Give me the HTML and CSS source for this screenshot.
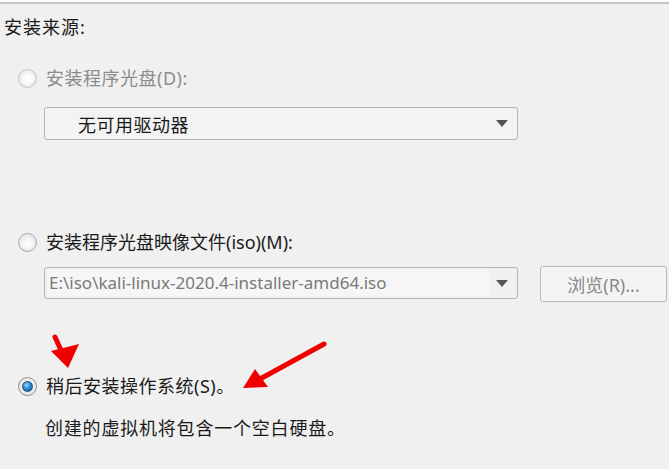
FILE: index.html
```html
<!DOCTYPE html>
<html lang="zh-CN">
<head>
<meta charset="utf-8">
<title>安装来源</title>
<link rel="stylesheet" href="styles.css">
</head>
<body>
<div class="page">
  <div class="topline"></div>
  <div class="title">安装来源:</div>

  <div class="option opt-disc disabled">
    <span class="radio"></span>
    <span class="label">安装程序光盘(D):</span>
  </div>
  <div class="combo combo-disc">
    <span class="combo-text">无可用驱动器</span>
    <span class="caret"></span>
  </div>

  <div class="option opt-iso">
    <span class="radio"></span>
    <span class="label">安装程序光盘映像文件(iso)(M):</span>
  </div>
  <div class="iso-row">
    <div class="combo combo-iso">
      <span class="edit">E:\iso\kali-linux-2020.4-installer-amd64.iso</span>
      <span class="caret"></span>
    </div>
    <button class="browse">浏览(R)...</button>
  </div>

  <div class="option opt-later">
    <span class="radio checked"></span>
    <span class="label">稍后安装操作系统(S)。</span>
  </div>
  <div class="desc">创建的虚拟机将包含一个空白硬盘。</div>

  <svg class="arrows" width="669" height="469" viewBox="0 0 669 469">
    <path d="M55 337 L64 357" stroke="#f00000" stroke-width="5" stroke-linecap="round" fill="none"/>
    <polygon points="68,368 51,351 79,344" fill="#f00000"/>
    <path d="M324 344 L260 379" stroke="#f00000" stroke-width="5" stroke-linecap="round" fill="none"/>
    <polygon points="243,388 255,369 268,387" fill="#f00000"/>
  </svg>
</div>
</body>
</html>
```
FILE: styles.css
```css
html, body {
  margin: 0;
  padding: 0;
}
body {
  background: #f0f0f0;
  font-family: "Noto Sans", "Noto Sans CJK SC", sans-serif;
  font-size: 18px;
  color: #1a1a1a;
}
.page {
  position: relative;
  width: 669px;
  height: 469px;
  overflow: hidden;
}
.topline {
  height: 2px;
  background: #fafafa;
  border-bottom: 2px solid #c6c6c6;
}
.title {
  margin: 13px 0 0 4px;
  line-height: 20px;
  height: 20px;
  letter-spacing: 1px;
}
.option {
  display: flex;
  align-items: center;
  height: 20px;
  line-height: 20px;
  margin-left: 18px;
  gap: 9px;
}
.opt-disc { margin-top: 31px; }
.opt-iso { margin-top: 92px; }
.opt-later { margin-top: 74px; }
.disabled .label { color: #8c8c8c; }
.opt-disc .label, .opt-later .label { letter-spacing: 0.5px; }

.radio {
  width: 17px;
  height: 17px;
  border-radius: 50%;
  border: 1px solid #a9a9a9;
  background: radial-gradient(circle at 50% 55%, #fdfdfd 0, #f4f4f4 45%, #dcdcdc 70%, #cfcfcf 100%);
  box-shadow: inset 0 0 0 2px #ececec;
  flex: none;
  position: relative;
}
.disabled .radio {
  border-color: #c4c4c4;
  background: radial-gradient(circle at 50% 55%, #ffffff 0, #f7f7f7 50%, #e6e6e6 100%);
}
.radio.checked {
  border-color: #8e8e8e;
  background: radial-gradient(circle at 50% 50%, #f2f2f2 0, #e0e0e0 100%);
}
.radio.checked::after {
  content: "";
  position: absolute;
  left: 3px;
  top: 3px;
  width: 9px;
  height: 9px;
  border-radius: 50%;
  border: 1px solid #1c4f7a;
  background: radial-gradient(circle at 40% 35%, #9fd6ff 0, #2b8ad8 45%, #0b4f95 100%);
}

.combo {
  box-sizing: border-box;
  width: 474px;
  height: 33px;
  border: 1px solid #b3b3b3;
  border-radius: 3px;
  background: #f3f3f3;
  display: flex;
  align-items: center;
  position: relative;
}
.combo-disc {
  margin: 19px 0 0 44px;
}
.combo-text {
  margin-left: 33px;
  flex: 1;
  letter-spacing: 0.5px;
}
.caret {
  width: 0;
  height: 0;
  border-left: 6px solid transparent;
  border-right: 6px solid transparent;
  border-top: 7px solid #555;
  margin-right: 9px;
  flex: none;
}
.iso-row {
  display: flex;
  align-items: flex-start;
  margin: 14px 0 0 44px;
  gap: 22px;
}
.combo-iso {
  margin-top: 1px;
  height: 32px;
  background: #f0f0f0;
  padding: 2px 0 2px 2px;
  align-items: stretch;
}
.combo-iso .edit {
  flex: none;
  width: 440px;
  background: #f6f6f6;
  color: #7a7a7a;
  line-height: 26px;
  padding-left: 2px;
  font-size: 17px;
  white-space: nowrap;
  overflow: hidden;
}
.combo-iso .caret {
  align-self: center;
  margin-left: auto;
}
.browse {
  box-sizing: border-box;
  width: 127px;
  height: 36px;
  border: 1px solid #b9b9b9;
  border-radius: 3px;
  background: #f4f4f4;
  color: #8a8a8a;
  font-family: inherit;
  font-size: 18px;
  padding: 0;
}
.desc {
  margin: 22px 0 0 45px;
  line-height: 20px;
  letter-spacing: 0.8px;
}
.arrows {
  position: absolute;
  left: 0;
  top: 0;
  pointer-events: none;
}
```
